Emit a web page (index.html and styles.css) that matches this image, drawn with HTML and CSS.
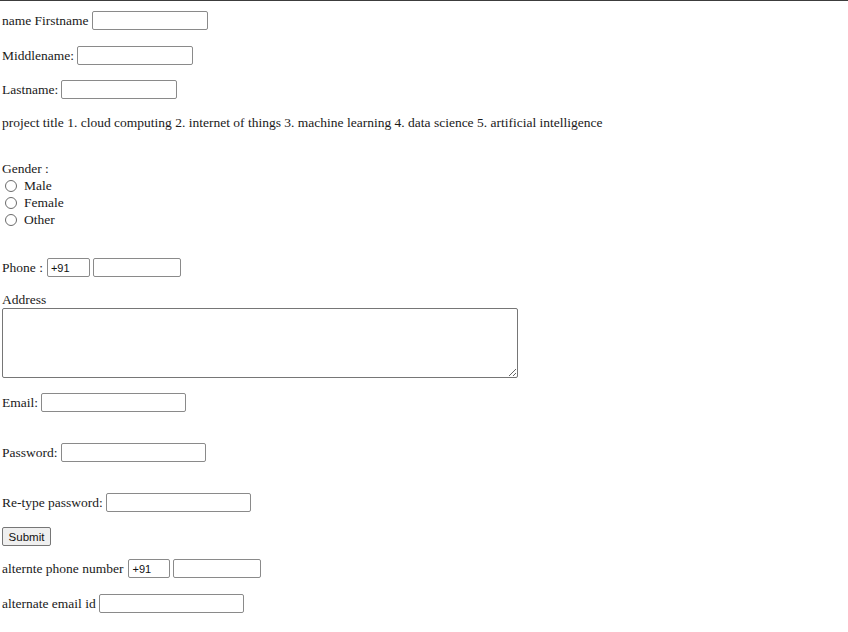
FILE: index.html
```html
<!DOCTYPE html>
<html>
<head>
<meta charset="utf-8">
<link rel="stylesheet" href="styles.css">
</head>
<body>
<form class="form">
  <div class="row r1"><label>name Firstname</label><input class="in w116" type="text"></div>
  <div class="row r2"><label>Middlename:</label><input class="in w116" type="text"></div>
  <div class="row r3"><label>Lastname:</label><input class="in w116" type="text"></div>
  <div class="line r4">project title 1. cloud computing 2. internet of things 3. machine learning 4. data science 5. artificial intelligence</div>
  <div class="line r5">Gender :</div>
  <div class="radio"><span class="dot"></span>Male</div>
  <div class="radio"><span class="dot"></span>Female</div>
  <div class="radio"><span class="dot"></span>Other</div>
  <div class="row r6"><label class="lbl-phone">Phone :</label><input class="in w43" type="text" value="+91"><input class="in w88" type="text"></div>
  <div class="line r7">Address</div>
  <textarea class="ta"></textarea>
  <div class="row r8"><label>Email:</label><input class="in w145" type="text"></div>
  <div class="row r9"><label>Password:</label><input class="in w145" type="password"></div>
  <div class="row r9"><label>Re-type password:</label><input class="in w145" type="password"></div>
  <div class="row r10"><button class="btn" type="button">Submit</button></div>
  <div class="row r11"><label class="lbl-alt">alternte phone number</label><input class="in w42" type="text" value="+91"><input class="in w88" type="text"></div>
  <div class="row r12"><label>alternate email id</label><input class="in w145" type="text"></div>
</form>
</body>
</html>
```
FILE: styles.css
```css
html, body {
  margin: 0;
  padding: 0;
  background: #fff;
}
body {
  border-top: 1px solid #3c3c3c;
  font-family: "Liberation Serif", "Times New Roman", serif;
  font-size: 13.5px;
  color: #1a1a1a;
}
.form {
  display: flex;
  flex-direction: column;
  align-items: flex-start;
  padding: 0 2px;
}
.row {
  display: flex;
  align-items: center;
  gap: 3px;
  height: 19px;
}
.line {
  height: 16px;
  line-height: 16px;
}
.r1 { margin-top: 10px; }
.r2 { margin-top: 16px; }
.r3 { margin-top: 15px; }
.r4 { margin-top: 16px; }
.r5 { margin-top: 30px; }
.r6 { margin-top: 30px; }
.r7 { margin-top: 15px; }
.r8 { margin-top: 15px; }
.r9 { margin-top: 31px; }
.r10 { margin-top: 15px; }
.r11 { margin-top: 13px; }
.r12 { margin-top: 16px; }
.radio {
  display: flex;
  align-items: center;
  height: 17px;
  line-height: 17px;
  padding-left: 3px;
}
.dot {
  width: 10px;
  height: 10px;
  border: 1px solid #6b6b6b;
  border-radius: 50%;
  margin-right: 7px;
  background: #fff;
}
.in {
  box-sizing: border-box;
  height: 19px;
  border: 1px solid #8a8a8a;
  border-radius: 2px;
  padding: 0 3px;
  font-family: "Liberation Sans", Arial, sans-serif;
  font-size: 11px;
  color: #111;
  background: #fff;
  margin: 0;
}
.lbl-phone { margin-right: 1px; }
.lbl-alt { margin-right: 2px; }
.w116 { width: 116px; }
.w43 { width: 43px; }
.w42 { width: 42px; }
.w88 { width: 88px; }
.w145 { width: 145px; }
.ta {
  box-sizing: border-box;
  width: 516px;
  height: 70px;
  border: 1px solid #767676;
  border-radius: 2px;
  margin: 0;
  padding: 2px;
  resize: both;
  font-family: "Liberation Mono", monospace;
  font-size: 11px;
  background: #fff;
}
.btn {
  box-sizing: border-box;
  height: 19px;
  width: 49px;
  padding: 0;
  border: 1px solid #767676;
  border-radius: 2px;
  background: #efefef;
  font-family: "Liberation Sans", Arial, sans-serif;
  font-size: 11.5px;
  color: #111;
}
```
